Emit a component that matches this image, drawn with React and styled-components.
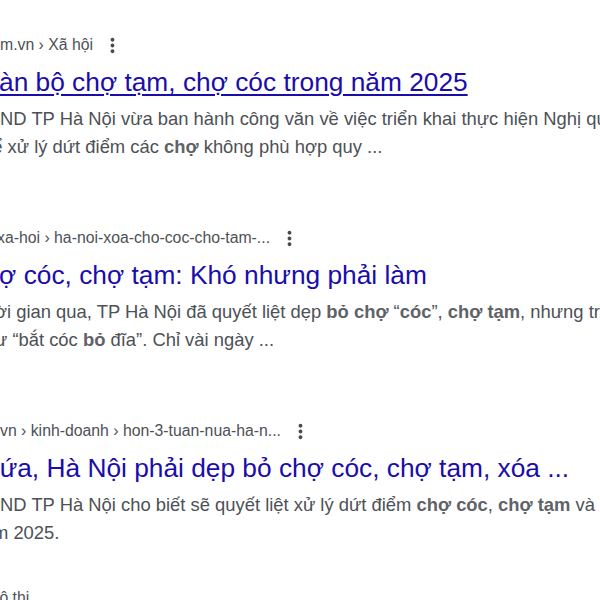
import React from 'react';
import styled, { createGlobalStyle } from 'styled-components';

const Global = createGlobalStyle`
  html, body { margin: 0; padding: 0; background: #fff; overflow: hidden; }
  body { font-family: "Liberation Sans", Arial, sans-serif; }
  #root { width: 600px; height: 600px; overflow: hidden; }
`;

const Page = styled.main`
  width: 600px;
  height: 600px;
  overflow: hidden;
  box-sizing: border-box;
  padding-top: 33px;
  display: flex;
  flex-direction: column;
`;

const Result = styled.section`
  display: flex;
  flex-direction: column;
  margin-bottom: ${p => p.$gap ?? 65}px;
`;

const Crumb = styled.div`
  display: flex;
  align-items: center;
  height: 24px;
  font-size: 15.8px;
  color: #4d5156;
  white-space: nowrap;
  margin-left: ${p => -(p.$shift || 0)}px;
`;

const CrumbText = styled.span`
  line-height: 24px;
`;

const MoreBtn = styled.span`
  display: inline-flex;
  align-items: center;
  justify-content: center;
  width: 23px;
  height: 23px;
  margin-left: 8px;
  color: #474b50;
`;

const Title = styled.a`
  display: block;
  margin-top: 8px;
  font-size: 26.3px;
  line-height: 34px;
  color: #1a0dab;
  white-space: nowrap;
  cursor: pointer;
  text-decoration: ${p => (p.$hover ? 'underline' : 'none')};
  text-decoration-thickness: 1.5px;
  text-underline-offset: 3px;
  margin-left: ${p => -(p.$shift || 0)}px;
`;

const Snippet = styled.div`
  margin-top: 6px;
  display: flex;
  flex-direction: column;
  font-size: 18.4px;
  line-height: 28px;
  color: #4d5156;
`;

const Line = styled.div`
  white-space: nowrap;
  margin-left: ${p => -(p.$shift || 0)}px;
`;

const B = styled.b`
  font-weight: bold;
  color: #5f6368;
`;

const MoreVert = () => (
  <svg width="23" height="23" viewBox="0 0 24 24" fill="currentColor" aria-hidden="true">
    <path d="M12 8c1.1 0 2-.9 2-2s-.9-2-2-2-2 .9-2 2 .9 2 2 2zm0 2c-1.1 0-2 .9-2 2s.9 2 2 2 2-.9 2-2-.9-2-2-2zm0 6c-1.1 0-2 .9-2 2s.9 2 2 2 2-.9 2-2-.9-2-2-2z" />
  </svg>
);

const Breadcrumb = ({ shift, children }) => (
  <Crumb $shift={shift}>
    <CrumbText>{children}</CrumbText>
    <MoreBtn>
      <MoreVert />
    </MoreBtn>
  </Crumb>
);

export default function App() {
  return (
    <>
      <Global />
      <Page>
        <Result>
          <Breadcrumb shift={0}>m.vn › Xã hội</Breadcrumb>
          <Title $hover $shift={1}>àn bộ chợ tạm, chợ cóc trong năm 2025</Title>
          <Snippet>
            <Line $shift={25.5}>UBND TP Hà Nội vừa ban hành công văn về việc triển khai thực hiện Nghị quyết</Line>
            <Line $shift={18}>để xử lý dứt điểm các <B>chợ</B> không phù hợp quy ...</Line>
          </Snippet>
        </Result>

        <Result>
          <Breadcrumb shift={3}>xa-hoi › ha-noi-xoa-cho-coc-cho-tam-...</Breadcrumb>
          <Title $shift={28.7}>chợ cóc, chợ tạm: Khó nhưng phải làm</Title>
          <Snippet>
            <Line $shift={26.5}>Thời gian qua, TP Hà Nội đã quyết liệt dẹp <B>bỏ chợ</B> “<B>cóc</B>”, <B>chợ tạm</B>, nhưng tr</Line>
            <Line $shift={25.5}>như “bắt cóc <B>bỏ</B> đĩa”. Chỉ vài ngày ...</Line>
          </Snippet>
        </Result>

        <Result $gap={39}>
          <Breadcrumb shift={0}>vn › kinh-doanh › hon-3-tuan-nua-ha-n...</Breadcrumb>
          <Title $shift={15}>nứa, Hà Nội phải dẹp bỏ chợ cóc, chợ tạm, xóa ...</Title>
          <Snippet>
            <Line $shift={25.5}>UBND TP Hà Nội cho biết sẽ quyết liệt xử lý dứt điểm <B>chợ cóc</B>, <B>chợ tạm</B> và</Line>
            <Line $shift={27.5}>năm 2025.</Line>
          </Snippet>
        </Result>

        <Result $gap={0}>
          <Crumb $shift={12}>
            <CrumbText>Đô thị</CrumbText>
          </Crumb>
        </Result>
      </Page>
    </>
  );
}
